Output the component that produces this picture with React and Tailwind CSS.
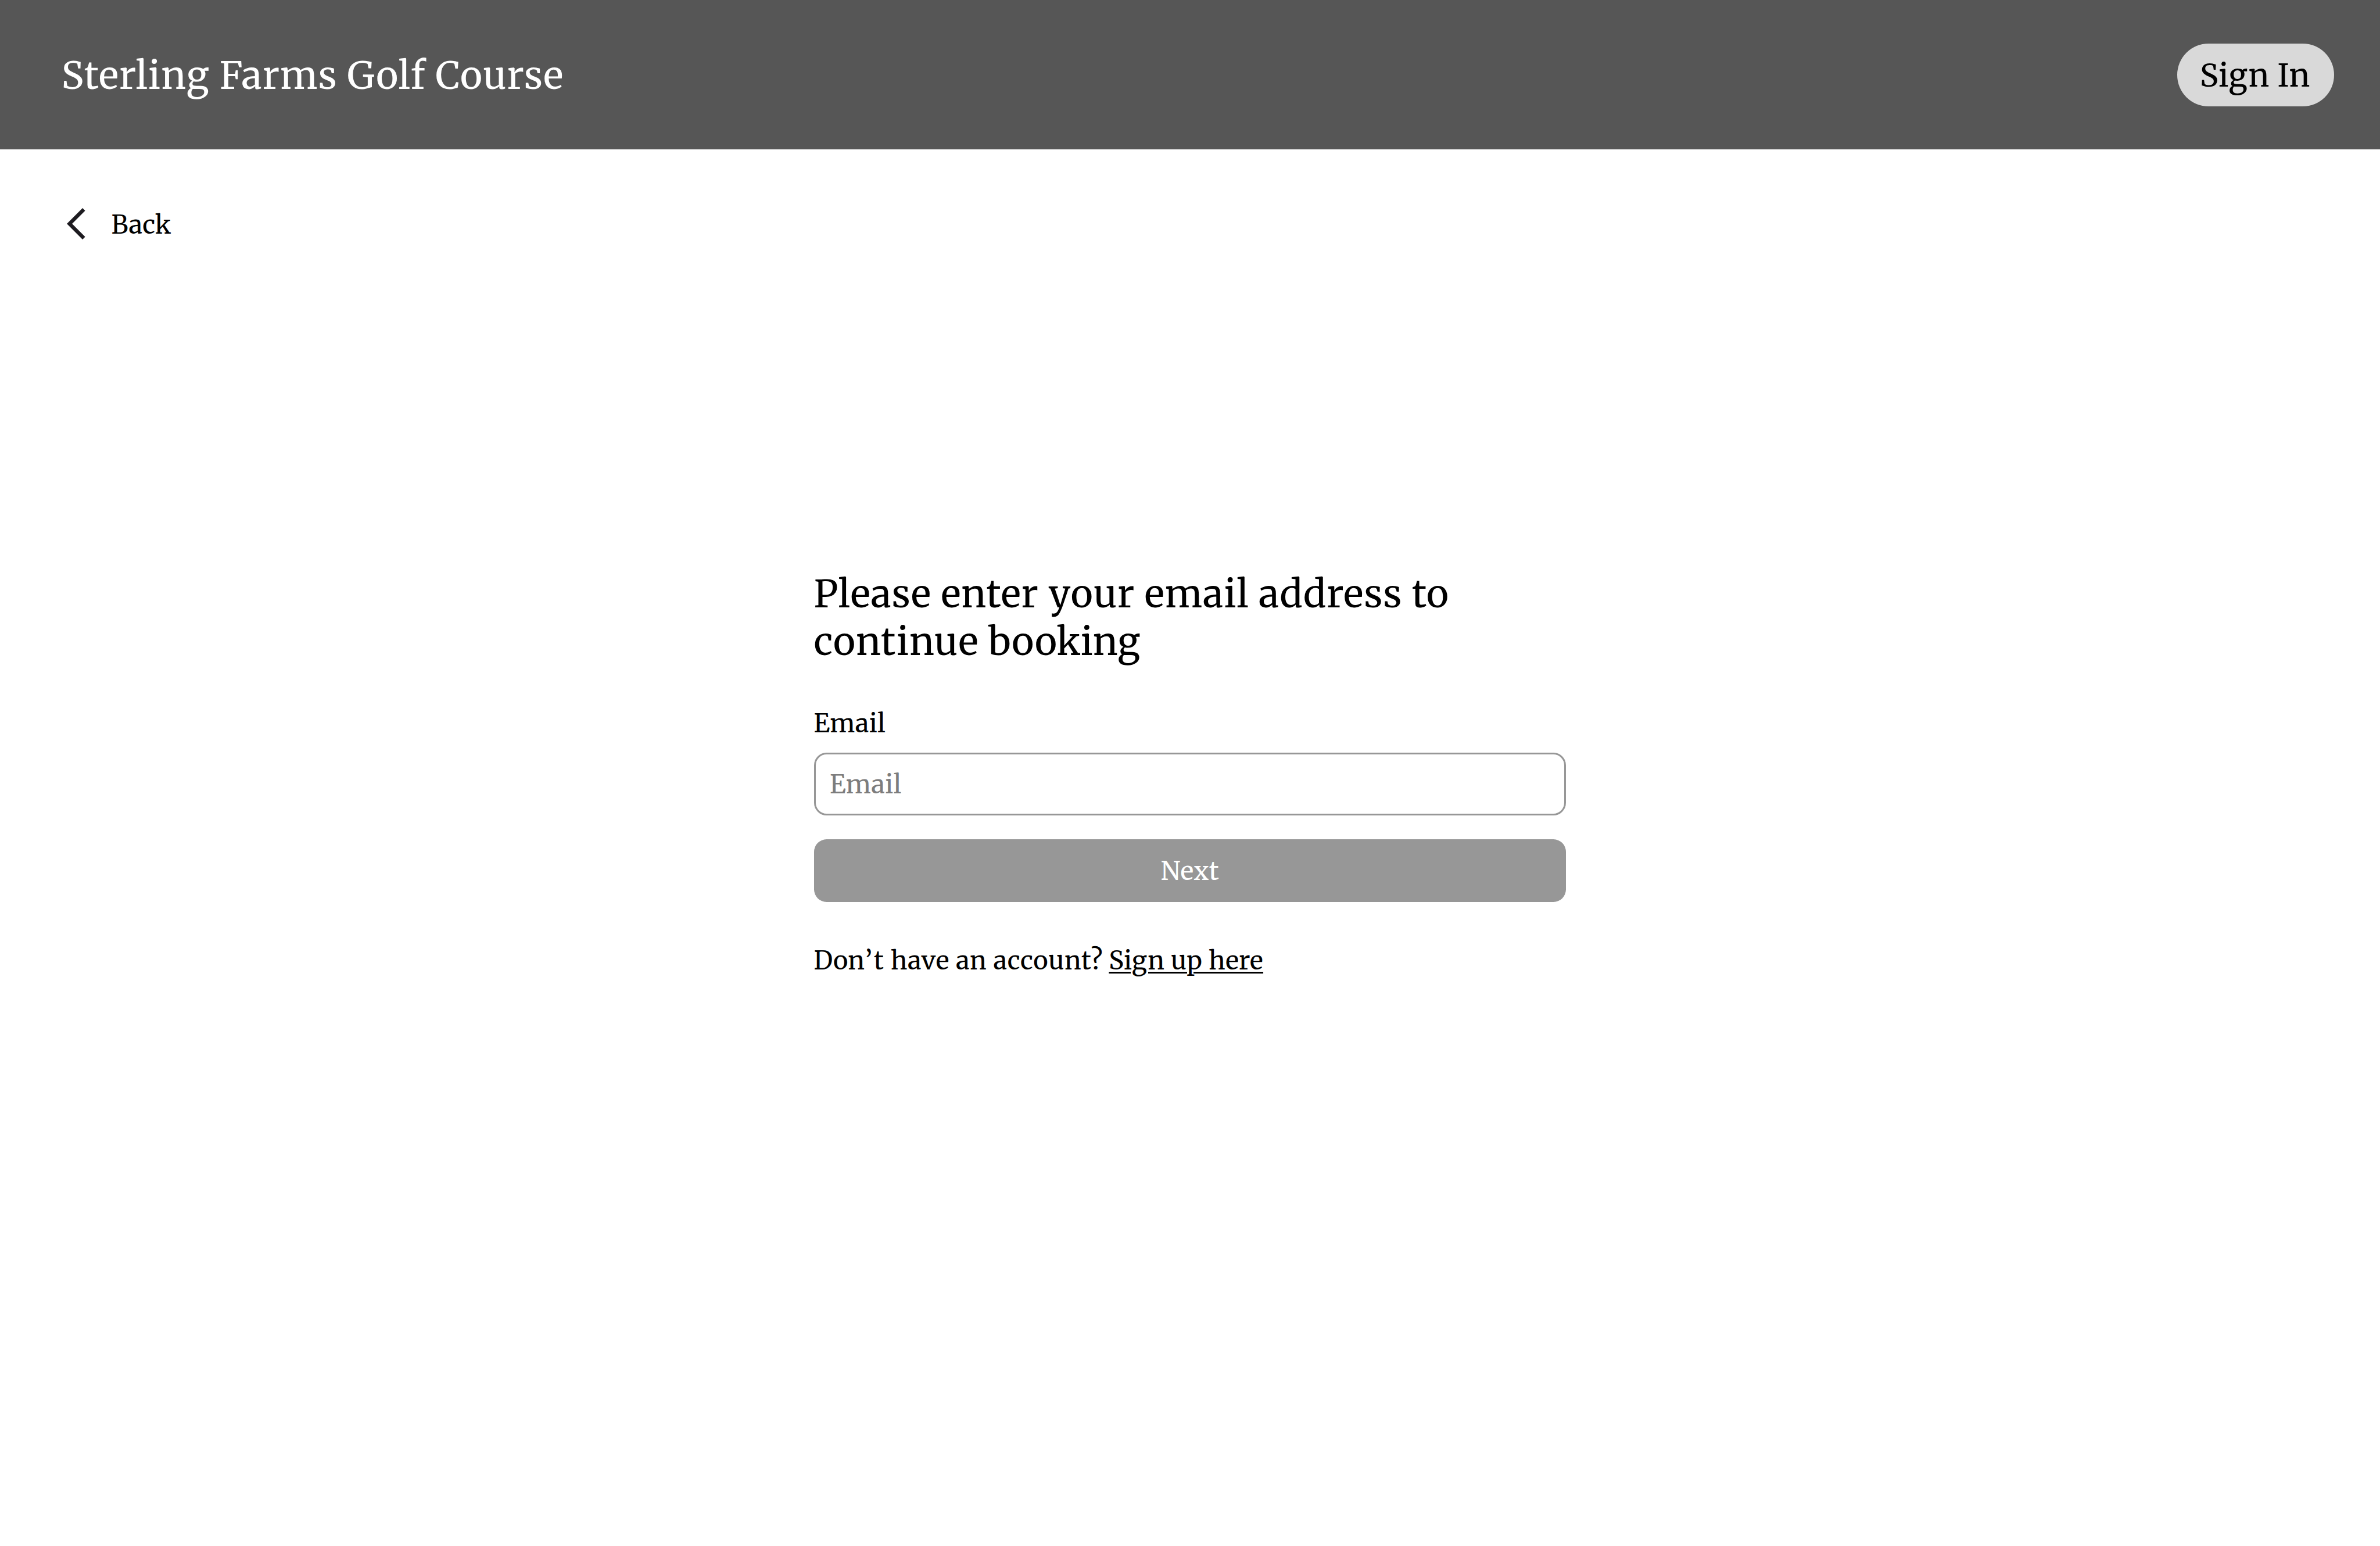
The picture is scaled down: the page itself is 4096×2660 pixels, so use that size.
import React, { useState } from 'react'

function Header() {
  return (
    <header className="h-[257.4px] pl-[105.5px] pr-[78.6px] bg-[#565656] flex items-center justify-between">
      <h1 className="pt-[3px] text-[65px] leading-[81.3px] tracking-[0.0175em] text-white">
        Sterling Farms Golf Course
      </h1>
      <button className="w-[270.9px] h-[108.4px] pt-[2px] pr-[2px] rounded-full bg-[#d9d9d9] text-[54.2px] leading-[68px] tracking-[0.011em] text-black">
        Sign In
      </button>
    </header>
  )
}

function BackLink() {
  return (
    <a href="#" className="self-start h-[68px] mt-[93.4px] ml-[115px] flex items-center text-black">
      <svg className="w-[32px] h-[54px]" viewBox="0 0 32 54" fill="none">
        <path d="M29.3 2.3L4.6 27L29.3 51.7" stroke="#1d1b20" strokeWidth="6.4" />
      </svg>
      <span className="ml-[44.5px] pt-[3px] text-[43.33px] leading-[65px] tracking-[0.15px]">Back</span>
    </a>
  )
}

function EmailForm() {
  const [email, setEmail] = useState('')

  return (
    <form className="w-[1294.9px] mx-auto mt-[563.6px] flex flex-col text-[43.33px] leading-[54.2px] text-black">
      <h2 className="text-[65px] leading-[81.3px] tracking-[0.0165em]">
        Please enter your email address to
        <br />
        continue <span className="tracking-normal">booking</span>
      </h2>

      <label htmlFor="email" className="mt-[72.6px] tracking-[0.45px]">Email</label>
      <input
        id="email"
        type="email"
        placeholder="Email"
        value={email}
        onChange={(e) => setEmail(e.target.value)}
        className="mt-[22.8px] h-[108.4px] px-[24.5px] pt-[2px] border-[3px] border-[#979797] rounded-[21.7px] bg-transparent tracking-[0.45px] placeholder:text-[#7d7d7d]"
      />

      <button
        type="button"
        className="mt-[40.6px] h-[108.4px] pt-[2px] rounded-[21.7px] bg-[#979797] tracking-[0.4px] text-white"
      >
        Next
      </button>

      {/* Sign up prompt */}
      <p className="mt-[74.4px] tracking-[0.018em]">
        <span className="tracking-normal">Do</span>
        <span className="tracking-[0.065em]">n’</span>t have an account?{' '}
        <a href="#" className="-ml-px tracking-[0.01em] underline decoration-[2.5px] underline-offset-[4px]">Sign up here</a>
      </p>
    </form>
  )
}

export default function App() {
  return (
    <div className="w-full h-screen flex flex-col bg-white font-['Merriweather','Noto_Serif','DejaVu_Serif_Condensed',serif]">
      <Header />
      <main className="flex-1 flex flex-col">
        <BackLink />
        <EmailForm />
      </main>
    </div>
  )
}
